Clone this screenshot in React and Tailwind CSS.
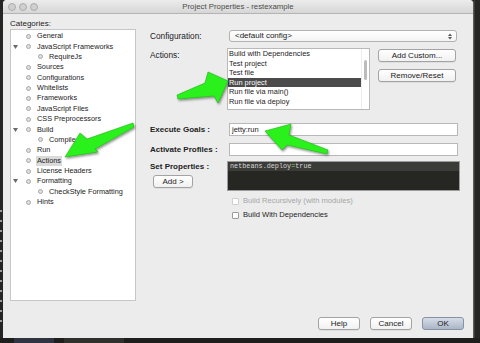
import React from 'react';

const tree = [
  { label: 'General', depth: 0 },
  { label: 'JavaScript Frameworks', depth: 0, open: true },
  { label: 'RequireJs', depth: 1 },
  { label: 'Sources', depth: 0 },
  { label: 'Configurations', depth: 0 },
  { label: 'Whitelists', depth: 0 },
  { label: 'Frameworks', depth: 0 },
  { label: 'JavaScript Files', depth: 0 },
  { label: 'CSS Preprocessors', depth: 0 },
  { label: 'Build', depth: 0, open: true },
  { label: 'Compile', depth: 1 },
  { label: 'Run', depth: 0 },
  { label: 'Actions', depth: 0, selected: true },
  { label: 'License Headers', depth: 0 },
  { label: 'Formatting', depth: 0, open: true },
  { label: 'CheckStyle Formatting', depth: 1 },
  { label: 'Hints', depth: 0 },
];

const actions = [
  'Build with Dependencies',
  'Test project',
  'Test file',
  'Run project',
  'Run file via main()',
  'Run file via deploy',
  'Debug project',
];

const Light = () => (
  <div className="w-[8px] h-[8px] rounded-full bg-[#cfcfcf] border border-[#adadad]" />
);

const Btn = ({ children, className = '' }) => (
  <div
    className={
      'h-[13px] flex items-center justify-center rounded-[3px] border border-[#a3a3a3] bg-gradient-to-b from-white to-[#f1f1f1] text-[8px] text-[#222] shadow-[0_1px_0_rgba(0,0,0,0.06)] ' +
      className
    }
  >
    {children}
  </div>
);

const Check = ({ label, disabled }) => (
  <div className="flex items-center h-[14px]">
    <div
      className={
        'w-[7px] h-[7px] rounded-[1px] border bg-white ' +
        (disabled ? 'border-[#cfcfcf]' : 'border-[#9a9a9a]')
      }
    />
    <span className={'ml-[4px] text-[7.6px] ' + (disabled ? 'text-[#a6a6a6]' : 'text-[#222]')}>
      {label}
    </span>
  </div>
);

// the three green pointer arrows drawn over the dialog
const Arrows = () => (
  <svg className="absolute left-0 top-0 pointer-events-none" width="480" height="343" viewBox="0 0 480 343">
    <defs>
      <filter id="sh" x="-20%" y="-20%" width="140%" height="140%">
        <feDropShadow dx="1" dy="1.5" stdDeviation="1.2" floodColor="#000" floodOpacity="0.45" />
      </filter>
    </defs>
    <g fill="#2bf01e" stroke="#1cb012" strokeWidth="0.6" strokeLinejoin="round" filter="url(#sh)">
      {/* to Run project */}
      <polygon points="177,95 205,83 208,72 228,81 218,103 214,96 178,99" />
      {/* to Actions */}
      <polygon points="133,123 87,139 80,133 65,157 98,152 95,149 134,127" />
      {/* to jetty:run */}
      <polygon points="328,150 289,135 291,124 265,131 282,150 287,145 327,154" />
    </g>
  </svg>
);

export default function App() {
  return (
    <div className="relative w-[480px] h-[343px] overflow-hidden bg-[#252523] font-['Liberation_Sans',Arial,sans-serif]">
      <div className="flex">
        <div className="w-[3px] h-[338px] flex flex-col justify-end gap-[8px] pb-[16px]">
          {Array.from({ length: 12 }).map((_, i) => (
            <div key={i} className="w-[2px] h-[2px] bg-[#9a9a9a]" />
          ))}
        </div>
        <div className="w-[471px] h-[338px] bg-[#ececec] flex flex-col rounded-t-[4px] border-r border-[#5a5a5a]">
          {/* title bar */}
          <div className="h-[14px] flex items-center rounded-t-[4px] bg-gradient-to-b from-[#ececec] to-[#d6d6d6] border-b border-[#b4b4b4]">
            <div className="w-[40px] flex items-center gap-[3px] pl-[5px]">
              <Light />
              <Light />
              <Light />
            </div>
            <div className="flex-1 text-center text-[7.8px] text-[#4c4c4c] leading-none">
              Project Properties - restexample
            </div>
            <div className="w-[40px]" />
          </div>

          <div className="flex flex-1">
            {/* left */}
            <div className="w-[140px] pl-[7px] pt-[4px]">
              <div className="h-[11px] leading-[11px] text-[8px] text-[#222]">Categories:</div>
              <div className="w-[126px] h-[272px] bg-white border border-[#c6c6c6] pt-[1px]">
                {tree.map((t) => (
                  <div key={t.label} className="flex items-center h-[10.375px]">
                    <div className="w-[13px] pl-[2px] flex items-center">
                      {t.open && (
                        <svg width="5" height="4" viewBox="0 0 5 4">
                          <polygon points="0,0 5,0 2.5,4" fill="#6a6a6a" />
                        </svg>
                      )}
                    </div>
                    {t.depth === 1 && <div className="w-[12px]" />}
                    <div className="ml-[2px] w-[5px] h-[5px] rounded-full bg-[#dedede] border border-[#a9a9a9]" />
                    <span
                      className={
                        'text-[7.3px] text-[#222] leading-[10px] ' +
                        (t.selected ? 'bg-[#dadada] px-[1px] ml-[5px]' : 'ml-[6px]')
                      }
                    >
                      {t.label}
                    </span>
                  </div>
                ))}
              </div>
            </div>

            {/* right */}
            <div className="flex-1 flex flex-col pl-[7px] pr-[9px]">
              {/* configuration */}
              <div className="flex items-center mt-[16px] h-[12px]">
                <div className="w-[79px] text-[8.3px] text-[#222]">Configuration:</div>
                <div className="w-[228px] h-[12px] flex items-center justify-between rounded-[3px] border border-[#b2b2b2] bg-gradient-to-b from-white to-[#f3f3f3] pl-[5px] pr-[4px]">
                  <span className="text-[8px] text-[#222]">&lt;default config&gt;</span>
                  <svg width="4" height="7" viewBox="0 0 4 7">
                    <polygon points="0,3 4,3 2,0.5" fill="#555" />
                    <polygon points="0,4 4,4 2,6.5" fill="#555" />
                  </svg>
                </div>
              </div>

              {/* actions */}
              <div className="flex mt-[6px]">
                <div className="w-[77px] text-[8.3px] text-[#222] pt-[1px]">Actions:</div>
                <div className="w-[143px] h-[62px] bg-white border border-[#b9b9b9] flex overflow-hidden">
                  <div className="flex-1 overflow-hidden">
                    {actions.map((a) => (
                      <div
                        key={a}
                        className={
                          'h-[9.6px] leading-[9.6px] pl-[1px] text-[7.4px] ' +
                          (a === 'Run project' ? 'bg-[#4b4b4b] text-white' : 'text-[#222]')
                        }
                      >
                        {a}
                      </div>
                    ))}
                  </div>
                  <div className="w-[8px] border-l border-[#ededed] flex justify-center pt-[11px]">
                    <div className="w-[3px] h-[20px] rounded-full bg-[#bcbcbc]" />
                  </div>
                </div>
                <div className="ml-[8px] flex flex-col gap-[7px] pt-[1px]">
                  <Btn className="w-[78px]">Add Custom...</Btn>
                  <Btn className="w-[78px]">Remove/Reset</Btn>
                </div>
              </div>

              {/* execute goals */}
              <div className="flex items-center mt-[13px] h-[13px]">
                <div className="w-[79px] text-[8px] font-bold text-[#222]">Execute Goals :</div>
                <div className="w-[229px] h-[13px] bg-white border border-[#b8b8b8] flex items-center pl-[2px] text-[7.5px] text-[#222]">
                  jetty:run
                </div>
              </div>

              {/* activate profiles */}
              <div className="flex items-center mt-[7px] h-[13px]">
                <div className="w-[79px] text-[8px] font-bold text-[#222]">Activate Profiles :</div>
                <div className="w-[229px] h-[13px] bg-white border border-[#b8b8b8]" />
              </div>

              {/* set properties */}
              <div className="flex mt-[5px]">
                <div className="w-[77px] flex flex-col">
                  <div className="text-[8px] font-bold text-[#222] leading-[9px] mt-[1px]">Set Properties :</div>
                  <Btn className="w-[40px] ml-[3px] mt-[4px]">Add &gt;</Btn>
                </div>
                <div className="w-[233px] h-[30px] bg-[#262622] border border-[#9c9c9c]">
                  <div className="h-[9px] bg-[#3b3b37] leading-[9px] pl-[2px] text-[6.8px] text-[#d6d6d6] font-['Liberation_Mono',monospace]">
                    netbeans.deploy<span className="text-[#7ed957]">=</span>true
                  </div>
                </div>
              </div>

              <div className="ml-[82px] mt-[3px]">
                <Check label="Build Recursively (with modules)" disabled />
                <Check label="Build With Dependencies" />
              </div>

              {/* footer */}
              <div className="mt-auto mb-[8px] flex justify-end gap-[10px]">
                <Btn className="w-[42px]">Help</Btn>
                <Btn className="w-[42px]">Cancel</Btn>
                <div className="w-[42px] h-[13px] flex items-center justify-center rounded-[3px] border border-[#8592a6] bg-gradient-to-b from-[#d6dde8] to-[#aab5c6] text-[8px] text-[#222]">
                  OK
                </div>
              </div>
            </div>
          </div>
        </div>
        <div className="flex-1 h-[338px] border-l border-[#3a3a38]" />
      </div>
      <div className="h-[5px] bg-[#1e1e1c] flex">
        <div className="w-[40px] h-[5px] ml-[14px] bg-[#2f3440]" />
        <div className="w-[60px] h-[5px] ml-[10px] bg-[#30302c]" />
      </div>
      <Arrows />
    </div>
  );
}
